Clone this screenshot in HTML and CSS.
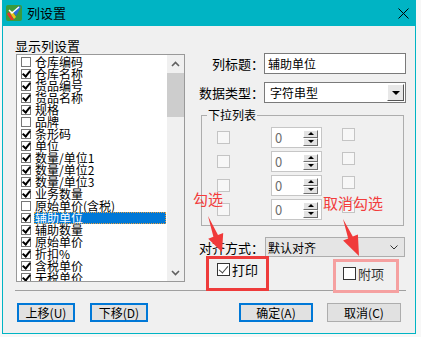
FILE: index.html
```html
<!DOCTYPE html>
<html>

<head>
  <title>列设置</title>
  <link rel="stylesheet" href="styles.css">
</head>

<body>
  <div class="window">
    <div class="titlebar">
      <svg class="app-icon" width="16" height="16" viewBox="0 0 16 16">
        <rect x="0" y="0" width="16" height="16" rx="2" fill="#3c9a3c"/>
        <path d="M1 9 L5 15 L8 15 L3 7 Z" fill="#e8342c"/>
        <path d="M4 8 L8 14 L10 12 L6 6 Z" fill="#f4c21c"/>
        <path d="M7 7 L10 11 L15 2 L13 1 Z" fill="#2b6fd8"/>
        <path d="M3 5 L6 8 L13 2" stroke="#fff" stroke-width="1.5" fill="none"/>
      </svg>
      <span class="title">列设置</span>
      <svg class="close" width="11" height="11" viewBox="0 0 11 11">
        <path d="M0.5 0.5 L10.5 10.5 M10.5 0.5 L0.5 10.5" stroke="#000" stroke-width="1"/>
      </svg>
    </div>

    <div class="dialog">
      <div class="panes">
        <div class="left">
          <div class="caption">显示列设置</div>
          <div class="listbox">
            <div class="items">
              <div class="item"><span class="cb"></span><span class="name">仓库编码</span></div>
              <div class="item"><span class="cb on"></span><span class="name">仓库名称</span></div>
              <div class="item"><span class="cb on"></span><span class="name">货品编号</span></div>
              <div class="item"><span class="cb on"></span><span class="name">货品名称</span></div>
              <div class="item"><span class="cb on"></span><span class="name">规格</span></div>
              <div class="item"><span class="cb"></span><span class="name">品牌</span></div>
              <div class="item"><span class="cb on"></span><span class="name">条形码</span></div>
              <div class="item"><span class="cb on"></span><span class="name">单位</span></div>
              <div class="item"><span class="cb on"></span><span class="name">数量/单位1</span></div>
              <div class="item"><span class="cb on"></span><span class="name">数量/单位2</span></div>
              <div class="item"><span class="cb on"></span><span class="name">数量/单位3</span></div>
              <div class="item"><span class="cb on"></span><span class="name">业务数量</span></div>
              <div class="item"><span class="cb"></span><span class="name">原始单价(含税)</span></div>
              <div class="item selected"><span class="cb on"></span><span class="name">辅助单位</span></div>
              <div class="item"><span class="cb on"></span><span class="name">辅助数量</span></div>
              <div class="item"><span class="cb on"></span><span class="name">原始单价</span></div>
              <div class="item"><span class="cb on"></span><span class="name">折扣%</span></div>
              <div class="item"><span class="cb on"></span><span class="name">含税单价</span></div>
              <div class="item"><span class="cb on"></span><span class="name">无税单价</span></div>
            </div>
            <div class="scrollbar">
              <div class="sb-btn">
                <svg width="9" height="6" viewBox="0 0 9 6"><path d="M1 5 L4.5 1.5 L8 5" stroke="#606060" stroke-width="1.6" fill="none"/></svg>
              </div>
              <div class="sb-thumb"></div>
              <div class="sb-gap"></div>
              <div class="sb-btn">
                <svg width="9" height="6" viewBox="0 0 9 6"><path d="M1 1 L4.5 4.5 L8 1" stroke="#606060" stroke-width="1.6" fill="none"/></svg>
              </div>
            </div>
          </div>
        </div>

        <div class="right">
          <div class="field">
            <label>列标题：</label>
            <div class="textbox">辅助单位</div>
          </div>
          <div class="field">
            <label>数据类型：</label>
            <div class="selectbox">字符串型<span class="drop"><i class="tri-down"></i></span></div>
          </div>

          <fieldset class="group">
            <legend>下拉列表</legend>
            <div class="spin-grid">
              <span class="gbox"></span>
              <div class="spin">0<span class="spin-btns"><span><i class="tri-up"></i></span><span><i class="tri-down small"></i></span></span></div>
              <span class="gbox top"></span>

              <span class="gbox"></span>
              <div class="spin">0<span class="spin-btns"><span><i class="tri-up"></i></span><span><i class="tri-down small"></i></span></span></div>
              <span class="gbox top"></span>

              <span class="gbox"></span>
              <div class="spin">0<span class="spin-btns"><span><i class="tri-up"></i></span><span><i class="tri-down small"></i></span></span></div>
              <span class="gbox top"></span>

              <span class="gbox"></span>
              <div class="spin">0<span class="spin-btns"><span><i class="tri-up"></i></span><span><i class="tri-down small"></i></span></span></div>
              <span class="gbox top"></span>
            </div>
          </fieldset>

          <div class="field align">
            <label>对齐方式：</label>
            <div class="combo">默认对齐
              <svg width="8" height="5" viewBox="0 0 8 5"><path d="M0.5 0.5 L4 4 L7.5 0.5" stroke="#333" stroke-width="1" fill="none"/></svg>
            </div>
          </div>

          <div class="flags">
            <label class="flag"><span class="box on"></span>打印</label>
            <label class="flag extra"><span class="box"></span>附项</label>
          </div>
        </div>
      </div>

      <div class="separator"></div>

      <div class="actions">
        <div class="btn-row left-btns">
          <button class="btn focus">上移(U)</button>
          <button class="btn focus">下移(D)</button>
        </div>
        <div class="btn-row right-btns">
          <button class="btn focus wide">确定(A)</button>
          <button class="btn wide">取消(C)</button>
        </div>
      </div>
    </div>
  </div>

  <!-- annotations drawn over the screenshot -->
  <svg class="marks" width="421" height="337" viewBox="0 0 421 337">
    <rect x="207.5" y="257.5" width="60" height="32" fill="none" stroke="#ee3b3b" stroke-width="3"/>
    <rect x="334.5" y="260.5" width="63" height="31" fill="none" stroke="#f5a0a0" stroke-width="3"/>
    <polygon points="208,216 218,234.9 223.2,232.9 222,252 208.2,238.7 213.4,236.7" fill="#f03a3a"/>
    <polygon points="343,219 352.8,236.6 357.9,234.5 359,256 343.1,240.5 348.2,238.4" fill="#f03a3a"/>
  </svg>
  <div class="note note-check">勾选</div>
  <div class="note note-uncheck">取消勾选</div>
</body>

</html>
```

FILE: styles.css
```css
* {
  box-sizing: border-box;
}

body {
  margin: 0;
  width: 421px;
  height: 337px;
  position: relative;
  overflow: hidden;
  background: #f7f7f7;
  font-family: "Noto Sans CJK SC", "Liberation Sans", sans-serif;
  font-size: 12px;
  color: #000;
}

.window {
  margin-left: 2px;
  width: 414px;
  height: 334px;
  border: 1px solid #00b4c4;
  border-top: none;
  background: #f0f0f0;
  display: flex;
  flex-direction: column;
}

.titlebar {
  height: 26px;
  flex: none;
  background: #00b4c4;
  display: flex;
  align-items: center;
  padding-left: 3px;
}

.titlebar .app-icon {
  margin-right: 5px;
}

.titlebar .title {
  font-size: 13px;
  line-height: 16px;
}

.titlebar .close {
  margin-left: auto;
  margin-right: 6px;
}

.dialog {
  flex: 1;
  padding: 11px 9px 0 12px;
}

.panes {
  display: grid;
  grid-template-columns: 170px 1fr;
  column-gap: 12px;
  height: 245px;
}

/* left list */
.caption {
  font-size: 13px;
  line-height: 17px;
}

.listbox {
  margin-left: 1px;
  width: 169px;
  height: 228px;
  border: 1px solid #999;
  background: #fff;
  display: flex;
}

.items {
  flex: 1;
  padding-top: 1px;
  overflow: hidden;
}

.item {
  height: 12px;
  display: flex;
  align-items: center;
  font-size: 12px;
  line-height: 12px;
  white-space: nowrap;
}

.item .cb {
  flex: none;
  position: relative;
  width: 10px;
  height: 10px;
  margin: 0 3px 0 4px;
  border: 1px solid #777;
  background: #fff;
}

.item .cb.on::after {
  content: "";
  position: absolute;
  left: 2px;
  top: -1px;
  width: 3px;
  height: 6px;
  border: solid #000;
  border-width: 0 2px 2px 0;
  transform: rotate(40deg);
}

.item .name {
  flex: 1;
  height: 12px;
  padding-left: 1px;
  margin-right: 1px;
}

.item.selected .name {
  background: #0078d7;
  color: #fff;
  outline: 1px dotted #e8a040;
  outline-offset: -1px;
}

.scrollbar {
  width: 17px;
  background: #f0f0f0;
  display: flex;
  flex-direction: column;
}

.sb-btn {
  height: 17px;
  display: flex;
  align-items: center;
  justify-content: center;
}

.sb-thumb {
  height: 44px;
  margin-top: 1px;
  background: #cdcdcd;
}

.sb-gap {
  flex: 1;
}

/* right side */
.right {
  padding-top: 16px;
}

.field {
  display: grid;
  grid-template-columns: 67px 1fr;
  align-items: center;
  height: 21px;
}

.field + .field {
  margin-top: 8px;
}

.field label {
  font-size: 13px;
  text-align: right;
  white-space: nowrap;
}

.textbox {
  height: 21px;
  border: 1px solid #7a7a7a;
  background: #fff;
  padding-left: 3px;
  font-size: 12px;
  line-height: 19px;
}

.selectbox {
  height: 21px;
  border: 1px solid #7a7a7a;
  background: #fff;
  padding: 0 1px 0 5px;
  font-size: 12px;
  display: flex;
  align-items: center;
  justify-content: space-between;
}

.drop {
  width: 17px;
  height: 17px;
  background: #e8e8e8;
  border: 1px solid;
  border-color: #fff #555 #555 #fff;
  display: flex;
  align-items: center;
  justify-content: center;
}

.tri-down {
  width: 0;
  height: 0;
  border-left: 4px solid transparent;
  border-right: 4px solid transparent;
  border-top: 4px solid #000;
}

.tri-up {
  width: 0;
  height: 0;
  border-left: 3px solid transparent;
  border-right: 3px solid transparent;
  border-bottom: 3px solid #000;
}

.tri-down.small {
  border-left-width: 3px;
  border-right-width: 3px;
  border-top-width: 3px;
}

.group {
  margin: 5px 2px 0 4px;
  padding: 5px 0 5px 5px;
  border: 1px solid #adadad;
  min-width: 0;
}

.group legend {
  font-size: 12px;
  line-height: 14px;
  padding: 0 1px;
}

.spin-grid {
  display: grid;
  grid-template-columns: 54px 71px 13px;
  grid-auto-rows: 21px;
  row-gap: 3px;
  padding-left: 10px;
}

.gbox {
  width: 13px;
  height: 13px;
  align-self: center;
  border: 1px solid #c4c4c4;
  background: #f7f7f7;
}

.gbox.top {
  align-self: start;
  margin-top: 1px;
}

.spin {
  width: 51px;
  height: 21px;
  border: 1px solid #c6c6c6;
  background: #fff;
  padding-left: 3px;
  color: #6d6d6d;
  font-size: 13px;
  display: flex;
  align-items: center;
  justify-content: space-between;
}

.spin-btns {
  width: 15px;
  height: 16px;
  margin-right: 3px;
  display: flex;
  flex-direction: column;
}

.spin-btns span {
  flex: 1;
  background: #e3e3e3;
  border: 1px solid;
  border-color: #fff #6f6f6f #6f6f6f #fff;
  display: flex;
  align-items: center;
  justify-content: center;
}

.field.align {
  margin-top: 11px;
  height: 20px;
}

.combo {
  height: 20px;
  margin: 0 1px;
  border: 1px solid #adadad;
  background: #e5e5e5;
  padding: 0 6px 0 2px;
  font-size: 12px;
  display: flex;
  align-items: center;
  justify-content: space-between;
}

.flags {
  margin-top: 6px;
  padding-left: 20px;
  display: grid;
  grid-template-columns: 126px auto;
  align-items: start;
}

.flag {
  display: flex;
  align-items: center;
  height: 13px;
  font-size: 13px;
}

.flag.extra {
  margin-top: 4px;
  color: #333;
}

.flag .box {
  position: relative;
  width: 13px;
  height: 13px;
  margin-right: 2px;
  border: 1px solid #333;
  background: #fff;
}

.flag .box.on::after {
  content: "";
  position: absolute;
  left: 3px;
  top: 0;
  width: 4px;
  height: 8px;
  border: solid #444;
  border-width: 0 1.5px 1.5px 0;
  transform: rotate(40deg);
}

.separator {
  height: 1px;
  margin-top: 8px;
  background: #a0a0a0;
}

.actions {
  margin-top: 12px;
  display: grid;
  grid-template-columns: 170px 1fr;
  column-gap: 12px;
}

.btn-row {
  display: flex;
}

.left-btns {
  padding-left: 2px;
  gap: 15px;
}

.right-btns {
  padding-left: 42px;
  gap: 14px;
}

.btn {
  width: 58px;
  height: 19px;
  padding: 0;
  border: 1px solid #adadad;
  background: #e1e1e1;
  font-family: inherit;
  font-size: 12px;
  line-height: 15px;
  color: #000;
}

.btn.wide {
  width: 74px;
}

.btn.focus {
  border: 2px solid #0078d7;
}

/* red annotations */
.marks {
  position: absolute;
  left: 0;
  top: 0;
  pointer-events: none;
}

.note {
  position: absolute;
  font-size: 15px;
  line-height: 18px;
  color: #f23c3c;
}

.note-check {
  left: 193px;
  top: 190px;
}

.note-uncheck {
  left: 323px;
  top: 194px;
}
```
